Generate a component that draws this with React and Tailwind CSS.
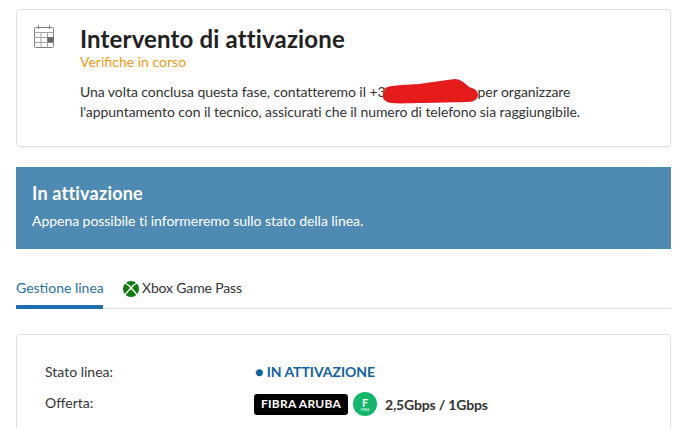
const CalendarIcon = () => (
  <svg width="22" height="25" viewBox="0 0 22 25" fill="none" stroke="#808080" strokeWidth="1">
    <rect x="1.500" y="3.500" width="19" height="20" rx="1" />
    <path d="M1.500 8.500h19M1.500 13.500h19M1.500 18.500h19M8 8.500v15M14.500 8.500v15" stroke="#a0a0a0" />
    <path d="M5.500 1v4M16.500 1v4" stroke="#888" />
    <rect x="14.500" y="13" width="6" height="5.500" fill="#666" stroke="none" />
  </svg>
);

const XboxIcon = () => (
  <svg width="16" height="16" viewBox="0 0 16 16">
    <circle cx="8" cy="8" r="8" fill="#107c10" />
    <path
      d="M2.400 1.800C4.600 2.700 6.700 4.200 8 5.900 9.300 4.200 11.400 2.700 13.600 1.800L14.300 2.600C12.200 3.700 10.300 5.200 9 7 11.300 9.100 13.500 11.700 14.600 13.900L13.700 14.700C12.200 12.300 10 9.900 8 8.200 6 9.900 3.800 12.300 2.300 14.700L1.400 13.900C2.500 11.700 4.700 9.100 7 7 5.700 5.200 3.800 3.700 1.700 2.600z"
      fill="#fff"
    />
  </svg>
);

const Scribble = () => (
  <svg className="absolute left-[-3px] top-[-19px]" width="96" height="26" viewBox="0 0 96 26">
    <path
      d="M1 11C4 7 20 7 36 6 50 4 62 2 72 1c5 0 10 4 14 8 4 1 9 3 9 8 0 4-4 7-10 7-16 0-30 1-46 1-10 0-22 1-31 0-6-1-9-4-8-8 0-3 1-5 3-6z"
      fill="#e61c1c"
    />
  </svg>
);

export default function App() {
  return (
    <div className="w-[689px] h-[428px] overflow-hidden bg-white pl-4 pr-[18px] pt-[9px] font-['Lato',sans-serif] text-[#222]">
      {/* Intervento */}
      <div className="h-[138px] border border-[#dfdfdf] rounded shadow-[0_1px_1px_rgba(0,0,0,0.04)] flex pt-[14px] pl-[16px]">
        <div className="w-[47px] shrink-0">
          <CalendarIcon />
        </div>
        <div>
          <h1 className="text-[24px] leading-[30px] font-bold tracking-[0.15px] text-[#222]">Intervento di attivazione</h1>
          <p className="text-[14px] leading-[16px] text-[#f09a1a]">Verifiche in corso</p>
          <p className="mt-[12px] text-[14px] leading-[20px] tracking-[-0.06px] text-[#333]">
            Una volta conclusa questa fase, contatteremo il +3
            <span className="relative inline-block w-[92px]">
              <Scribble />
            </span>
            per organizzare
            <br />
            l'appuntamento con il tecnico, assicurati che il numero di telefono sia raggiungibile.
          </p>
        </div>
      </div>

      {/* Banner */}
      <div className="mt-[20px] h-[82px] bg-[#4e8ab2] px-4 pt-[14px] text-white">
        <h2 className="text-[18px] leading-[24px] font-bold tracking-[0.2px]">In attivazione</h2>
        <p className="mt-[6px] text-[14px] leading-[20px] tracking-[-0.04px]">Appena possibile ti informeremo sullo stato della linea.</p>
      </div>

      {/* Tabs */}
      <div className="mt-[21px] flex h-[39px] border-b border-[#dcdcdc] text-[14px] whitespace-nowrap">
        <div className="h-[39px] w-[87px] border-b-4 border-[#1f6fb2] pt-[8px] leading-[20px] text-[#2a70a8]">
          Gestione linea
        </div>
        <div className="ml-[20px] flex items-start gap-[3px] pt-[8px] leading-[20px] tracking-[-0.15px] text-[#333]">
          <span className="mt-[3px]">
            <XboxIcon />
          </span>
          Xbox Game Pass
        </div>
      </div>

      {/* Dettagli linea */}
      <div className="mt-[25px] h-[120px] border border-[#dfdfdf] rounded pl-[28px] pt-[26px] text-[14px] text-[#333]">
        <div className="flex h-[20px] items-center">
          <span className="w-[210px]">Stato linea:</span>
          <span className="font-bold text-[#0f62a8] tracking-[-0.05px]">● IN ATTIVAZIONE</span>
        </div>
        <div className="mt-[10px] flex h-[22px] items-center">
          <span className="w-[209px]">Offerta:</span>
          <div className="mt-[4px] flex items-center">
            <span className="flex h-[21px] w-[94px] items-center justify-center rounded-[3px] bg-black text-[12px] font-bold tracking-[0.25px] text-white">
              FIBRA ARUBA
            </span>
            <span className="ml-[5px] flex h-[24px] w-[24px] flex-col items-center justify-center rounded-full bg-[#12b76a] text-white">
              <span className="text-[11px] leading-[11px] font-bold">F</span>
              <span className="text-[3px] leading-[4px]">FIBRA</span>
            </span>
            <span className="ml-[8px] font-bold text-[#333] tracking-[-0.17px]">2,5Gbps / 1Gbps</span>
          </div>
        </div>
      </div>
    </div>
  );
}
